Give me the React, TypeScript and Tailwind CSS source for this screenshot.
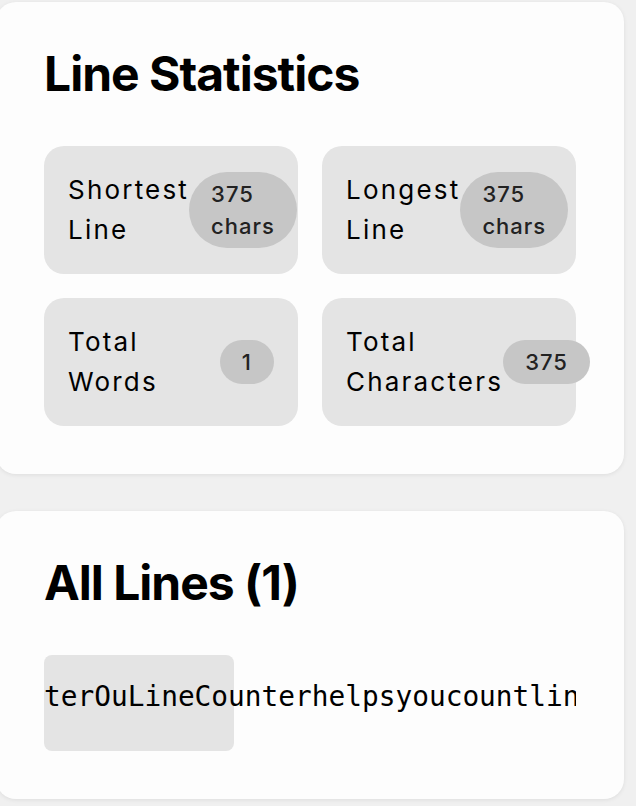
const stats = [
  { label: "Shortest Line", value: "375 chars" },
  { label: "Longest Line", value: "375 chars" },
  { label: "Total Words", value: "1" },
  { label: "Total Characters", value: "375" },
];

const lineText = "terOuLineCounterhelpsyoucountlinesinyourtextLineCounterOuLineCounterhelpsyoucount";

const App = () => {
  return (
    <div className="min-h-screen bg-[#f0f0f0] pt-[2px] font-[Inter,sans-serif] text-black overflow-hidden">
      {/* Line statistics card */}
      <section className="ml-[-4px] w-[628px] rounded-[20px] bg-[#fdfdfd] p-12 shadow-[0_1px_4px_rgba(0,0,0,0.08)]">
        <h2 className="mb-12 text-[48px] leading-[48px] font-bold tracking-[-1px]">Line Statistics</h2>
        <div className="grid grid-cols-2 gap-6">
          {stats.map((s) => (
            <div key={s.label} className="flex items-center justify-between rounded-[20px] bg-[#e4e4e4] p-6">
              <span className="w-min text-[26px] leading-10 tracking-[2.2px]">{s.label}</span>
              <span className="w-min rounded-full bg-[#c6c6c6] px-[22px] py-1.5 text-[22px] leading-8 font-medium tracking-[1px] text-[#222]">
                {s.value}
              </span>
            </div>
          ))}
        </div>
      </section>

      {/* All lines card */}
      <section className="mt-[37px] ml-[-4px] w-[628px] rounded-[20px] bg-[#fdfdfd] p-12 shadow-[0_1px_4px_rgba(0,0,0,0.08)]">
        <h2 className="mb-12 text-[48px] leading-[48px] font-bold tracking-[-1px]">All Lines (1)</h2>
        <div className="flex overflow-hidden">
          <div className="flex h-24 w-[190px] shrink-0 items-center whitespace-nowrap rounded-lg bg-[#e4e4e4] font-['DejaVu_Sans_Mono',monospace] text-[27.8px]">
            <span className="-mt-3">{lineText}</span>
          </div>
        </div>
      </section>
    </div>
  );
};

export default App;
